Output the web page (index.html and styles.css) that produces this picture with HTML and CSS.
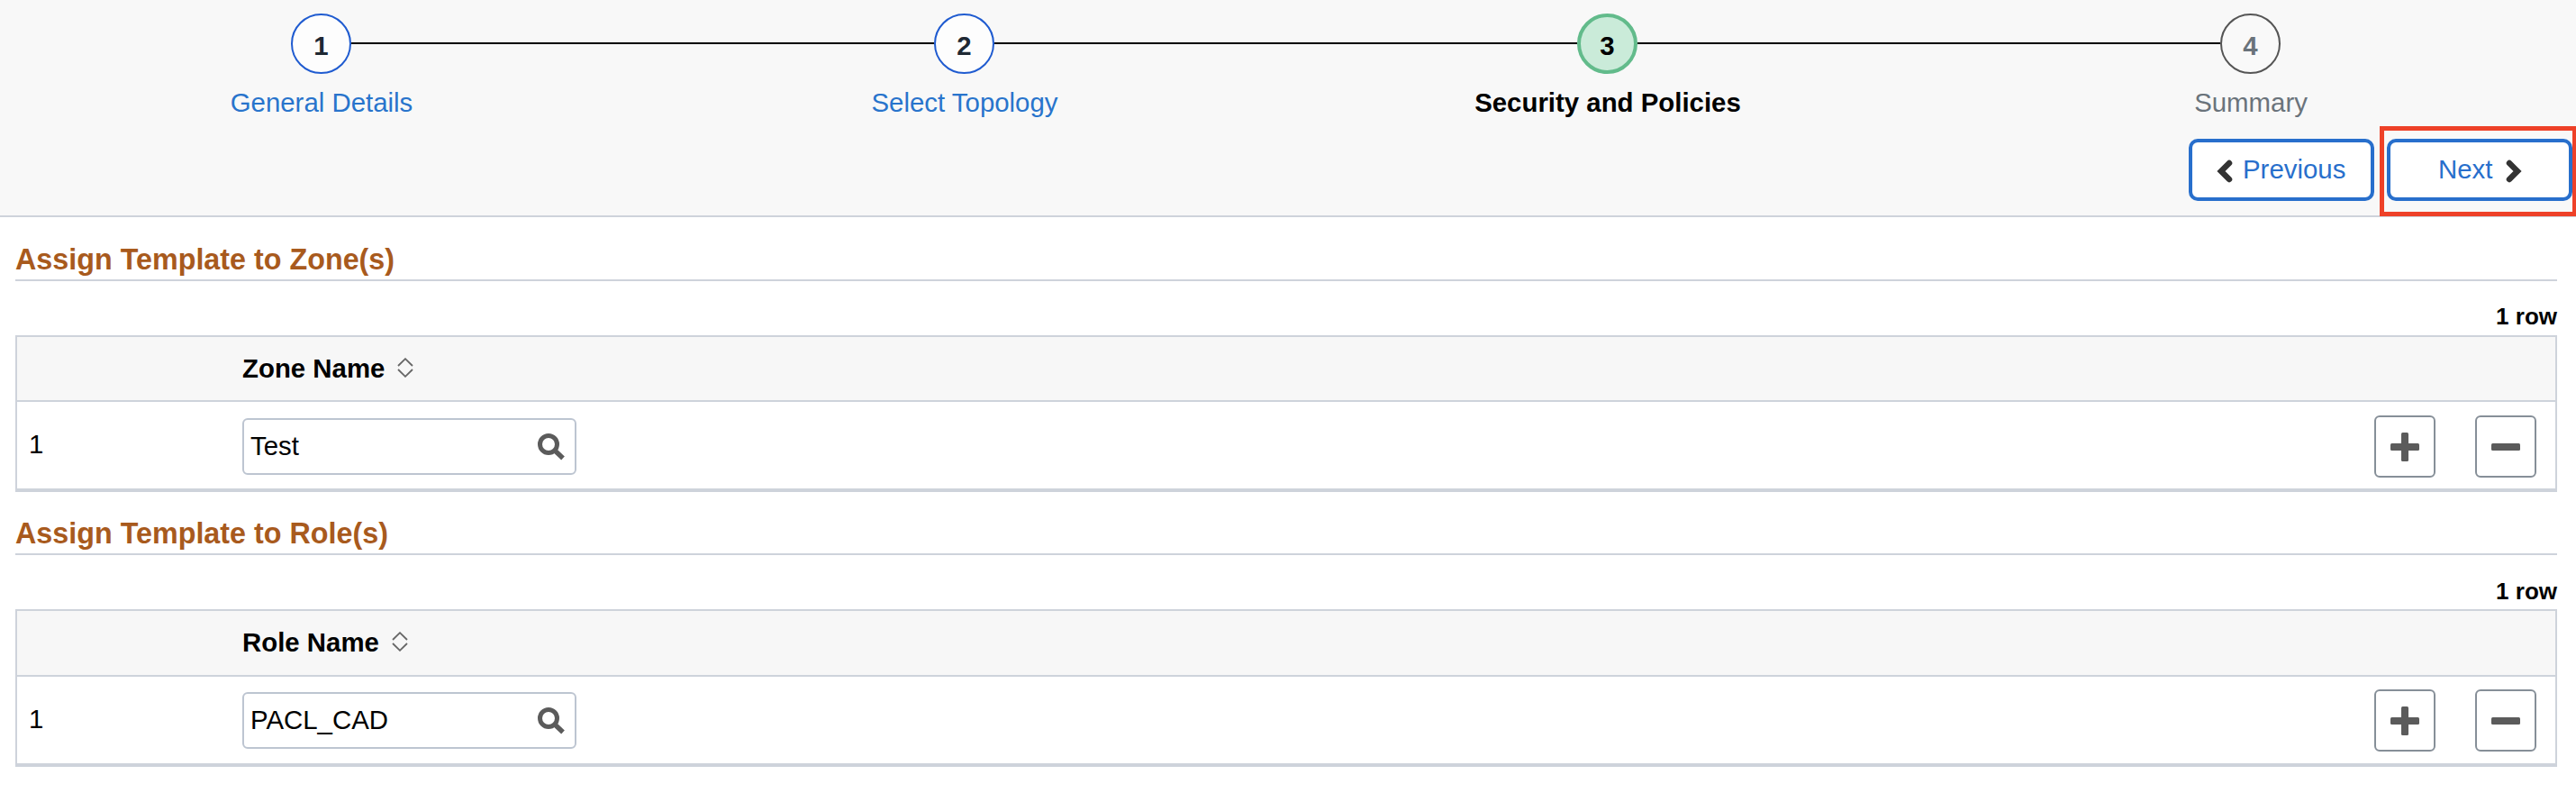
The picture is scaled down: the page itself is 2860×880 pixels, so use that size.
FILE: index.html
```
<!DOCTYPE html>
<html lang="en">
<head>
<meta charset="utf-8">
<title>Security and Policies</title>
<link rel="stylesheet" href="styles.css">
</head>
<body>
<header class="wizard">
  <ol class="steps">
    <li class="step done"><span class="dot">1</span><a class="label">General Details</a></li>
    <li class="step done"><span class="dot">2</span><a class="label">Select Topology</a></li>
    <li class="step current"><span class="dot">3</span><span class="label">Security and Policies</span></li>
    <li class="step todo"><span class="dot">4</span><span class="label">Summary</span></li>
  </ol>
  <div class="actions">
    <button class="nav prev"><svg class="chevron" viewBox="0 0 18 26"><path d="M14 4 L5 13 L14 22"/></svg><span>Previous</span></button>
    <div class="highlight"><button class="nav next"><span>Next</span><svg class="chevron" viewBox="0 0 18 26"><path d="M4 4 L13 13 L4 22"/></svg></button></div>
  </div>
</header>
<main class="content">
  <section class="group zones">
    <h2 class="title">Assign Template to Zone(s)</h2>
    <div class="count">1 row</div>
    <div class="grid">
      <div class="grid-head"><span>Zone Name</span><svg class="sort" viewBox="0 0 18 22"><path d="M1 9 L9 1.2 L17 9 M1 13 L9 20.8 L17 13"/></svg></div>
      <div class="grid-row">
        <span class="num">1</span>
        <div class="lookup"><input class="value" value="Test"><svg class="glass" viewBox="0 0 30 30"><circle cx="12" cy="12" r="9.5"/><path d="M18.5 18.5 L28 27.5"/></svg></div>
        <div class="row-tools">
          <button class="tool"><svg class="sign" viewBox="0 0 32 32"><rect y="12" width="32" height="8" rx="1.5"/><rect x="12" width="8" height="32" rx="1.5"/></svg></button>
          <button class="tool"><svg class="sign" viewBox="0 0 32 32"><rect y="12" width="32" height="8" rx="1.5"/></svg></button>
        </div>
      </div>
    </div>
  </section>
  <section class="group roles">
    <h2 class="title">Assign Template to Role(s)</h2>
    <div class="count">1 row</div>
    <div class="grid">
      <div class="grid-head"><span>Role Name</span><svg class="sort" viewBox="0 0 18 22"><path d="M1 9 L9 1.2 L17 9 M1 13 L9 20.8 L17 13"/></svg></div>
      <div class="grid-row">
        <span class="num">1</span>
        <div class="lookup"><input class="value" value="PACL_CAD"><svg class="glass" viewBox="0 0 30 30"><circle cx="12" cy="12" r="9.5"/><path d="M18.5 18.5 L28 27.5"/></svg></div>
        <div class="row-tools">
          <button class="tool"><svg class="sign" viewBox="0 0 32 32"><rect y="12" width="32" height="8" rx="1.5"/><rect x="12" width="8" height="32" rx="1.5"/></svg></button>
          <button class="tool"><svg class="sign" viewBox="0 0 32 32"><rect y="12" width="32" height="8" rx="1.5"/></svg></button>
        </div>
      </div>
    </div>
  </section>
</main>
</body>
</html>
```
FILE: styles.css
```
* { box-sizing: border-box; }
body {
  margin: 0;
  background: #fff;
  color: #000;
  font: 29.4px/34px "Liberation Sans", Arial, sans-serif;
  overflow: hidden;
}
button, input { font: inherit; }
svg { display: block; flex: none; fill: none; }

/* Step header */
.wizard {
  height: 241px;
  padding-top: 15px;
  background: #f8f8f8;
  border-bottom: 2px solid #ced3db;
}
.steps {
  display: flex;
  width: 2856px;
  margin: 0;
  padding: 0;
  list-style: none;
}
.step {
  flex: 1;
  display: grid;
  grid-template-columns: 323px 67px 1fr;
  row-gap: 15px;
}
.step::before, .step::after {
  content: "";
  grid-row: 1;
  height: 2px;
  margin-top: 32px;
  background: #000;
}
.step::before { grid-column: 1; }
.step::after { grid-column: 3; }
.step:first-child::before, .step:last-child::after { visibility: hidden; }
.dot {
  grid-area: 1 / 2;
  height: 67px;
  padding-top: 4px;
  display: flex;
  align-items: center;
  justify-content: center;
  border: 2px solid #1f5bd0;
  border-radius: 50%;
  background: #fdfdfd;
  color: #1e2833;
  font-weight: bold;
}
.label { grid-area: 2 / 1 / 3 / 4; text-align: center; }
.done .label { color: #2874cc; }
.current .dot { border: 4px solid #62bb8b; background: #caebd9; color: #000; }
.current .label { font-weight: bold; }
.todo .dot { border-color: #555; background: #f9f9f9; color: #6a737b; }
.todo .label { color: #6a737b; }

.actions {
  display: flex;
  justify-content: flex-end;
  align-items: flex-start;
  gap: 6px;
  margin: 9px -1px 0 0;
}
.nav {
  display: flex;
  align-items: center;
  width: 206px;
  height: 69px;
  padding: 0 0 1px;
  border: 4px solid #286fcc;
  border-radius: 10px;
  background: #fff;
  color: #286fcc;
}
.prev { margin-top: 14px; padding-left: 27px; gap: 11px; }
.next { padding-left: 53px; gap: 15px; }
.highlight {
  width: 219px;
  height: 100px;
  padding: 9px 3px;
  border: 5px solid #ee4128;
}
.chevron {
  width: 18px;
  height: 26px;
  margin-top: 3px;
  stroke: #333;
  stroke-width: 6.5;
  stroke-linecap: round;
}

/* Grids */
.content { padding: 0 21px 0 17px; }
.title {
  height: 71px;
  margin: 0;
  padding-top: 30px;
  border-bottom: 2px solid #ced3db;
  color: #a85a1d;
  font-size: 32.3px;
  line-height: 34px;
}
.count {
  height: 60px;
  padding-top: 22px;
  text-align: right;
  font-weight: bold;
  font-size: 26px;
}
.grid { border: 2px solid #ced3db; border-bottom-width: 4px; }
.grid-head {
  display: flex;
  align-items: center;
  gap: 14px;
  height: 72px;
  padding-left: 250px;
  border-bottom: 2px solid #ced3db;
  background: #f7f7f7;
  font-weight: bold;
}
.sort { width: 18px; height: 22px; margin-top: -2px; stroke: #666; stroke-width: 1.8; }
.grid-row {
  display: grid;
  grid-template-columns: 237px 371px 1fr;
  height: 96px;
  padding: 15px 21px 0 13px;
}
.num { padding-top: 15px; }
.lookup {
  display: flex;
  align-items: center;
  height: 63px;
  margin-top: 3px;
  padding: 0 11px 0 7px;
  border: 2px solid #bdc5d1;
  border-radius: 6px;
}
.value {
  flex: 1;
  min-width: 0;
  height: 40px;
  padding: 0 0 2px;
  border: 0;
  outline: 0;
  background: none;
  color: #000;
}
.glass { width: 30px; height: 30px; stroke: #5b5b5b; stroke-width: 5; }
.glass path { stroke-width: 5.4; }
.row-tools { display: flex; justify-content: flex-end; gap: 44px; }
.tool {
  display: flex;
  align-items: center;
  justify-content: center;
  width: 68px;
  height: 69px;
  padding: 0;
  border: 2px solid #868f98;
  border-radius: 6px;
  background: #fff;
}
.sign { width: 32px; height: 32px; fill: #5b5b5b; }

.roles .title { height: 70px; padding-top: 29px; }
.roles .count { padding-top: 23px; }
.roles .grid-head { height: 73px; padding-bottom: 2px; }
.roles .grid-row { padding-top: 14px; }
.roles .num { padding-top: 16px; }
```
